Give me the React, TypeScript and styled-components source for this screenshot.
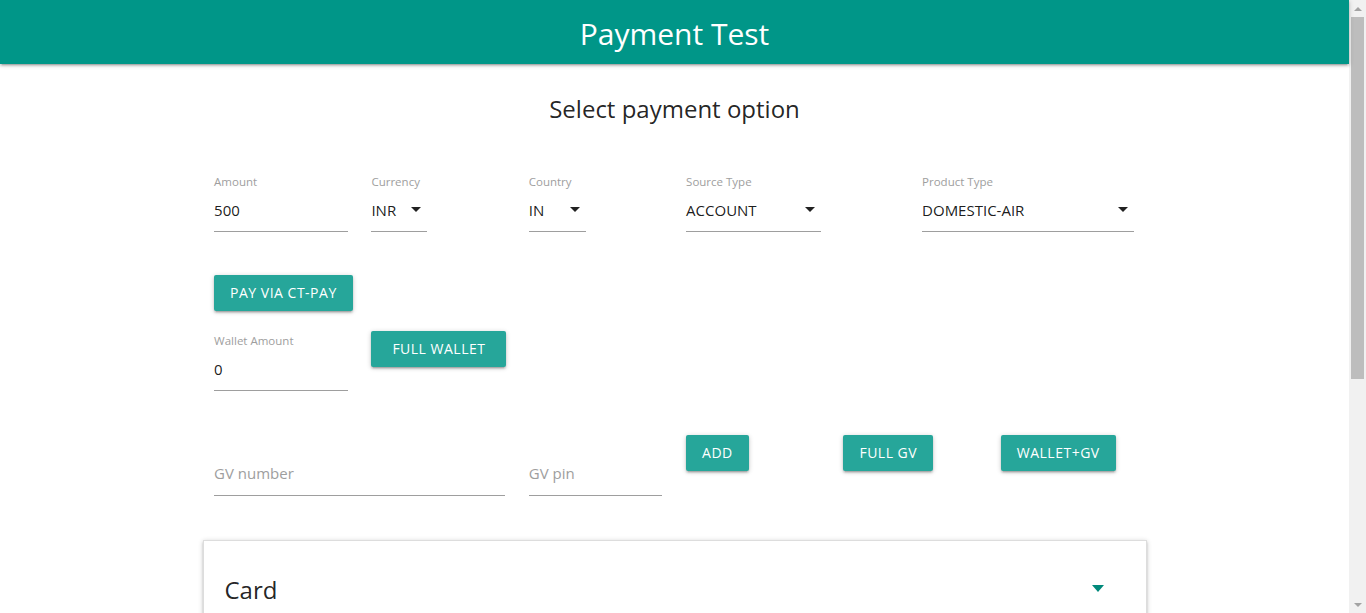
import React from "react";
import styled, { createGlobalStyle } from "styled-components";

const Global = createGlobalStyle`
  html, body { margin: 0; padding: 0; overflow: hidden; }
  body {
    font-family: "Open Sans", "Noto Sans", sans-serif;
    color: rgba(0,0,0,0.87);
    background: #fff;
  }
`;

const Viewport = styled.div`
  display: flex;
  height: 613px;
  overflow: hidden;
`;

const Page = styled.div`
  flex: 1;
  min-width: 0;
`;

const ScrollTrack = styled.div`
  width: 17px;
  flex: none;
  background: #f1f1f1;
  display: flex;
  flex-direction: column;
  align-items: center;
`;

const ScrollArrow = styled.div<{ $down?: boolean }>`
  height: 17px;
  width: 17px;
  display: flex;
  align-items: center;
  justify-content: center;
  margin-top: ${(p) => (p.$down ? "auto" : "0")};
  &::before {
    content: "";
    width: 0;
    height: 0;
    border-left: 4px solid transparent;
    border-right: 4px solid transparent;
    ${(p) =>
      p.$down
        ? "border-top: 4px solid #a3a3a3;"
        : "border-bottom: 4px solid #a3a3a3;"}
  }
`;

const ScrollThumb = styled.div`
  width: 13px;
  height: 362px;
  background: #bdbdbd;
`;

const Header = styled.header`
  height: 64px;
  background: #009688;
  box-shadow: 0 2px 2px 0 rgba(0,0,0,0.14), 0 3px 1px -2px rgba(0,0,0,0.12), 0 1px 5px 0 rgba(0,0,0,0.2);
  display: flex;
  align-items: center;
  justify-content: center;
  position: relative;
  z-index: 1;
`;

const Brand = styled.h1`
  margin: 0;
  color: #fff;
  font-weight: 400;
  font-size: 30px;
  line-height: 64px;
  padding-top: 4px;
`;

const Heading = styled.h2`
  margin: 0;
  padding-top: 28px;
  text-align: center;
  font-weight: 400;
  font-size: 24px;
  line-height: 34px;
  color: rgba(0,0,0,0.87);
`;

const Container = styled.main`
  width: 944px;
  margin: 0 auto;
`;

const Grid = styled.div<{ $top: number }>`
  display: grid;
  grid-template-columns: repeat(12, 1fr);
  margin-top: ${(p) => p.$top}px;
  align-items: start;
`;

const Col = styled.div<{ $span: number; $offset?: number }>`
  grid-column: span ${(p) => p.$span};
  padding: ${(p) => p.$offset ?? 0}px 12px 0 11.6px;
  display: flex;
`;

const Field = styled.div<{ $w?: number }>`
  width: ${(p) => (p.$w ? `${p.$w}px` : "100%")};
  display: flex;
  flex-direction: column;
`;

const Label = styled.label`
  font-size: 11.5px;
  line-height: 16px;
  color: #9e9e9e;
  margin-bottom: 8px;
`;

const Value = styled.div<{ $placeholder?: boolean }>`
  position: relative;
  font-size: 15px;
  line-height: 24px;
  padding-bottom: ${(p) => (p.$placeholder ? 10 : 9)}px;
  border-bottom: 1px solid #9e9e9e;
  color: ${(p) => (p.$placeholder ? "#9e9e9e" : "rgba(0,0,0,0.9)")};
`;

const Caret = styled.span`
  position: absolute;
  right: 6px;
  top: 9px;
  width: 0;
  height: 0;
  border-left: 5px solid transparent;
  border-right: 5px solid transparent;
  border-top: 5px solid rgba(0,0,0,0.87);
`;

const Button = styled.button<{ $minW?: number }>`
  height: 36px;
  min-width: ${(p) => (p.$minW ? `${p.$minW}px` : "0")};
  padding: 0 16px;
  border: none;
  border-radius: 2px;
  background: #26a69a;
  color: #fff;
  font-family: inherit;
  font-size: 14px;
  letter-spacing: 0.5px;
  line-height: 36px;
  text-transform: uppercase;
  white-space: nowrap;
  box-shadow: 0 2px 2px 0 rgba(0,0,0,0.14), 0 3px 1px -2px rgba(0,0,0,0.12), 0 1px 5px 0 rgba(0,0,0,0.2);
  cursor: pointer;
`;

const Card = styled.section`
  margin-top: 44px;
  border: 1px solid #ddd;
  box-shadow: 0 2px 2px 0 rgba(0,0,0,0.14), 0 3px 1px -2px rgba(0,0,0,0.12), 0 1px 5px 0 rgba(0,0,0,0.2);
  height: 300px;
`;

const CardHead = styled.div`
  display: flex;
  align-items: center;
  justify-content: space-between;
  padding: 32px 42px 0 21px;
  font-size: 24px;
  line-height: 34px;
`;

const CardCaret = styled.span`
  width: 0;
  height: 0;
  margin-bottom: 4px;
  border-left: 6px solid transparent;
  border-right: 6px solid transparent;
  border-top: 7px solid #00897b;
`;

function Select({ label, value, w }: { label: string; value: string; w?: number }) {
  return (
    <Field $w={w}>
      <Label>{label}</Label>
      <Value>
        {value}
        <Caret />
      </Value>
    </Field>
  );
}

export default function App() {
  return (
    <Viewport>
      <Global />
      <Page>
        <Header>
          <Brand>Payment Test</Brand>
        </Header>
        <Heading>Select payment option</Heading>
        <Container>
          <Grid $top={48}>
            <Col $span={2}>
              <Field>
                <Label>Amount</Label>
                <Value>500</Value>
              </Field>
            </Col>
            <Col $span={2}>
              <Select label="Currency" value="INR" w={56} />
            </Col>
            <Col $span={2}>
              <Select label="Country" value="IN" w={57} />
            </Col>
            <Col $span={3}>
              <Select label="Source Type" value="ACCOUNT" w={135} />
            </Col>
            <Col $span={3}>
              <Select label="Product Type" value="DOMESTIC-AIR" />
            </Col>
          </Grid>
          <Grid $top={43}>
            <Col $span={12}>
              <Button>Pay via CT-Pay</Button>
            </Col>
          </Grid>
          <Grid $top={20}>
            <Col $span={2} $offset={2}>
              <Field>
                <Label>Wallet Amount</Label>
                <Value>0</Value>
              </Field>
            </Col>
            <Col $span={2}>
              <Button $minW={135}>Full Wallet</Button>
            </Col>
          </Grid>
          <Grid $top={44}>
            <Col $span={4} $offset={26}>
              <Field>
                <Value $placeholder>GV number</Value>
              </Field>
            </Col>
            <Col $span={2} $offset={26}>
              <Field>
                <Value $placeholder>GV pin</Value>
              </Field>
            </Col>
            <Col $span={2}>
              <Button>Add</Button>
            </Col>
            <Col $span={2}>
              <Button>Full GV</Button>
            </Col>
            <Col $span={2}>
              <Button>Wallet+GV</Button>
            </Col>
          </Grid>
          <Card>
            <CardHead>
              <span>Card</span>
              <CardCaret />
            </CardHead>
          </Card>
        </Container>
      </Page>
      <ScrollTrack>
        <ScrollArrow />
        <ScrollThumb />
        <ScrollArrow $down />
      </ScrollTrack>
    </Viewport>
  );
}
